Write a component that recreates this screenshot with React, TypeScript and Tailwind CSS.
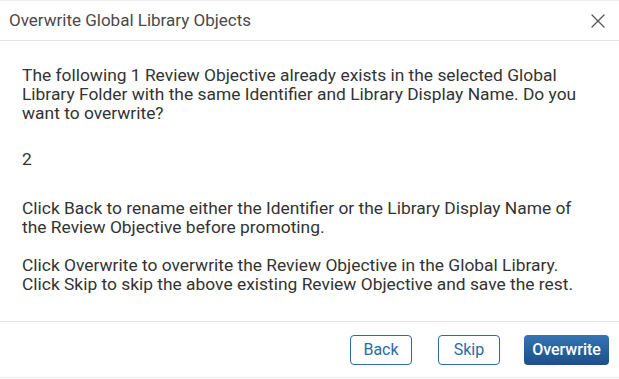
import { X } from 'lucide-react';

export default function App() {
  return (
    <div className="w-[619px] h-[379px] bg-white overflow-hidden" style={{ fontFamily: 'Roboto, "Liberation Sans", sans-serif' }}>
      <div className="flex flex-col h-[378px] border-t border-b border-[#ececec]">
        {/* Header */}
        <div className="h-[40px] flex items-center justify-between pl-[9px] pr-[9px] border-b border-[#e3e3e3]">
          <h2 className="text-[17px] text-[#4a4a4a] font-normal">Overwrite Global Library Objects</h2>
          <button className="text-[#555]">
            <X size={24} strokeWidth={1.3} />
          </button>
        </div>

        {/* Body */}
        <div className="flex-1 pl-[22px] pr-[26px] pt-[25px] text-[17.4px] leading-[19px] text-[#333]">
          <p>
            The following 1 Review Objective already exists in the selected Global Library Folder with the same Identifier and Library Display Name. Do you want to overwrite?
          </p>
          <p className="mt-[27px]">2</p>
          <p className="mt-[30px]">
            Click Back to rename either the Identifier or the Library Display Name of the Review Objective before promoting.
          </p>
          <p className="mt-[19px]">
            Click Overwrite to overwrite the Review Objective in the Global Library.
            <br />
            Click Skip to skip the above existing Review Objective and save the rest.
          </p>
        </div>

        {/* Footer */}
        <div className="h-[56px] flex items-center justify-end gap-[26px] pr-[10px] border-t border-[#e6e6e6]">
          <button className="w-[62px] h-[30px] rounded-[4px] border border-[#2d6aa5] text-[#2d6aa5] text-[16px]">Back</button>
          <div className="flex gap-[24px]">
            <button className="w-[62px] h-[30px] rounded-[4px] border border-[#2d6aa5] text-[#2d6aa5] text-[16px]">Skip</button>
            <button className="w-[85px] h-[30px] rounded-[4px] bg-gradient-to-b from-[#3575b5] to-[#1d4f86] text-white text-[16px] font-medium">Overwrite</button>
          </div>
        </div>
      </div>
    </div>
  );
}
